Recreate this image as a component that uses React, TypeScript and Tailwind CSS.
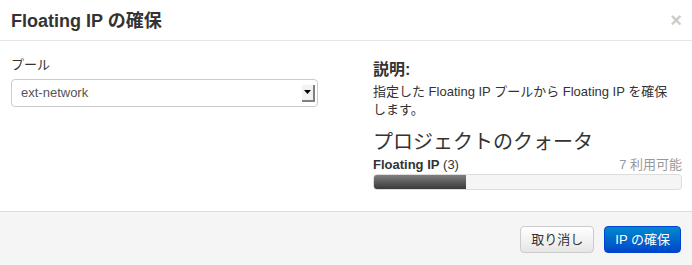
export default function App() {
  const used = 3;
  const total = 10;
  return (
    <div className="w-[692px] h-[265px] bg-white text-[#333] overflow-hidden font-['Liberation_Sans','Noto_Sans_CJK_JP',sans-serif]">
      <div className="h-[41px] flex items-center justify-between pl-[11px] pr-[10px] border-b border-[#e5e5e5]">
        <h3 className="text-[18px] font-bold leading-[20px] text-[#333] mt-[1px]">Floating IP の確保</h3>
        <span className="text-[20px] font-bold leading-[20px] text-black opacity-20">×</span>
      </div>

      <div className="h-[170px] flex pl-[11px] pr-[10px] pt-[15px]">
        <div className="w-[307px]">
          <label className="block text-[13px] leading-[18px]">プール</label>
          <div className="h-[28px] mt-[5px] border border-[#ccc] rounded-[4px] flex items-center justify-between pl-[9px] pr-[2px]">
            <span className="text-[13px] text-[#555]">ext-network</span>
            <div className="w-[13px] h-[17px] bg-[#f2f2f2] border-r-2 border-b-2 border-[#808080] flex items-center justify-center">
              <svg width="7" height="4" viewBox="0 0 7 4">
                <path d="M0 0h7L3.5 4z" fill="#000" />
              </svg>
            </div>
          </div>
        </div>

        <div className="ml-[55px] flex-1">
          <h3 className="text-[16px] font-bold leading-[20px] mt-[4px]">説明:</h3>
          <p className="text-[13px] leading-[18px] mt-[3px] pr-[10px]">
            指定した Floating IP プールから Floating IP を確保します。
          </p>
          <h3 className="text-[20px] leading-[24px] mt-[11px]">プロジェクトのクォータ</h3>
          <div className="flex justify-between text-[13px] leading-[16px] mt-[3px]">
            <span>
              <strong>Floating IP</strong> (3)
            </span>
            <span className="text-[#999]">7 利用可能</span>
          </div>
          <div className="h-[16px] mt-[1px] rounded-[4px] border border-[#ddd] bg-[#f5f5f5] overflow-hidden">
            <div
              className="h-full bg-gradient-to-b from-[#808080] to-[#3a3a3a]"
              style={{ width: `${(used / total) * 100}%` }}
            />
          </div>
        </div>
      </div>

      <div className="h-[54px] bg-[#f5f5f5] border-t border-[#ddd] flex items-center justify-end gap-[10px] pr-[11px] pt-[2px]">
        <button className="h-[27px] px-[10px] text-[13px] text-[#333] rounded-[4px] border border-[#ccc] bg-gradient-to-b from-white to-[#e6e6e6]">
          取り消し
        </button>
        <button className="h-[27px] px-[10px] text-[13px] text-white rounded-[4px] border border-[#0044cc] bg-gradient-to-b from-[#0088cc] to-[#0044cc]">
          IP の確保
        </button>
      </div>
    </div>
  );
}
